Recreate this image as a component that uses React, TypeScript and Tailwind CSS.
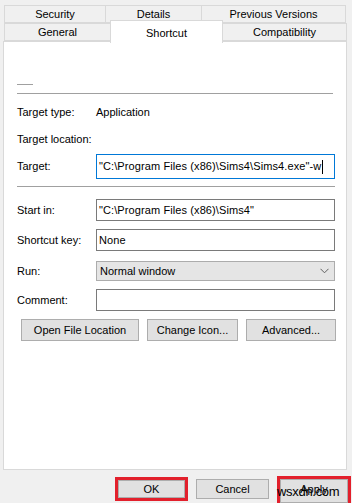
import React from 'react';

const font = { fontFamily: '"Liberation Sans", Arial, sans-serif' };

function Tab({ label, w }: { label: string; w: string }) {
  return (
    <div className={`${w} h-[18px] flex items-center justify-center border border-[#d9d9d9] -ml-px first:ml-0 bg-[#f0f0f0] text-[11px] text-black`}>
      {label}
    </div>
  );
}

function Field({ label, value, tall, caret }: { label: string; value?: string; tall?: boolean; caret?: boolean }) {
  return (
    <div className="flex items-center">
      <div className="w-[79px] text-[11px] text-black">{label}</div>
      <div
        className={`w-[239px] ${tall ? 'h-[25px] border-[#0078d7]' : 'h-[22px] border-[#7a7a7a]'} border bg-white flex items-center px-[2px] text-[11px] text-black`}
      >
        <span className="tracking-[0.1px]">{value}</span>
        {caret && <span className="ml-px w-px h-[14px] bg-black" />}
      </div>
    </div>
  );
}

function Btn({ label, w }: { label: string; w: string }) {
  return (
    <div className={`${w} h-[22px] border border-[#adadad] bg-[#e1e1e1] flex items-center justify-center text-[11px] text-black`}>
      {label}
    </div>
  );
}

export default function App() {
  return (
    <div className="relative w-[352px] h-[503px] bg-[#f0f0f0] overflow-hidden" style={font}>
      {/* Tab strip */}
      <div className="pt-[5px] pl-[4px]">
        <div className="flex">
          <Tab label="Security" w="w-[102px]" />
          <Tab label="Details" w="w-[97px]" />
          <Tab label="Previous Versions" w="w-[145px]" />
        </div>
        <div className="flex">
          <Tab label="General" w="w-[107px]" />
          <div className="relative z-10 w-[113px] h-[23px] -mt-[3px] -ml-px -mb-[2px] bg-white border border-[#d9d9d9] border-b-0 flex items-start justify-center pt-[4px] text-[11px] text-black">
            Shortcut
          </div>
          <Tab label="Compatibility" w="w-[125px]" />
        </div>
      </div>

      {/* Panel */}
      <div className="ml-[3px] w-[344px] h-[429px] bg-white border border-[#d9d9d9]">
        <div className="pl-[13px]">
          <div className="mt-[42px] w-[16px] h-px bg-[#a0a0a0]" />
          <div className="mt-[8px] w-[316px] h-px bg-[#a0a0a0]" />

          <div className="mt-[11px] flex items-center h-[14px] text-[11px] text-black">
            <div className="w-[79px]">Target type:</div>
            <div>Application</div>
          </div>
          <div className="mt-[13px] h-[14px] flex items-center text-[11px] text-black">Target location:</div>

          <div className="mt-[8px]">
            <Field label="Target:" value={'"C:\\Program Files (x86)\\Sims4\\Sims4.exe"-w'} tall caret />
          </div>
          <div className="mt-[7px] w-[318px] h-px bg-[#a0a0a0]" />

          <div className="mt-[12px]">
            <Field label="Start in:" value={'"C:\\Program Files (x86)\\Sims4"'} />
          </div>
          <div className="mt-[8px]">
            <Field label="Shortcut key:" value="None" />
          </div>
          <div className="mt-[10px] flex items-center">
            <div className="w-[79px] text-[11px] text-black">Run:</div>
            <div className="w-[239px] h-[20px] border border-[#acacac] bg-[#e5e5e5] flex items-center justify-between pl-[3px] pr-[5px] text-[11px] text-black">
              <span>Normal window</span>
              <svg width="9" height="6" viewBox="0 0 9 6" fill="none">
                <path d="M0.5 0.8 L4.5 4.8 L8.5 0.8" stroke="#606060" strokeWidth="1" />
              </svg>
            </div>
          </div>
          <div className="mt-[8px]">
            <Field label="Comment:" />
          </div>

          <div className="mt-[8px] pl-[4px] flex gap-[8px]">
            <Btn label="Open File Location" w="w-[118px]" />
            <Btn label="Change Icon..." w="w-[91px]" />
            <Btn label="Advanced..." w="w-[90px]" />
          </div>
        </div>
      </div>

      {/* Bottom buttons */}
      <div className="mt-[6px] pl-[115px] flex items-start">
        <div className="border-[3px] border-[#e2202c] w-[73px] h-[24px] mt-[1px]">
          <div className="w-full h-full border border-[#adadad] bg-[#e1e1e1] flex items-center justify-center text-[11px] text-black">OK</div>
        </div>
        <div className="ml-[8px] mt-[3px] w-[73px] h-[20px] border border-[#adadad] bg-[#e1e1e1] flex items-center justify-center text-[11px] text-black">
          Cancel
        </div>
        <div className="ml-[8px] border-[3px] border-[#e2202c] w-[74px] h-[30px]">
          <div className="w-full h-full border border-[#adadad] bg-[#e1e1e1] flex items-center justify-center text-[11px] text-black pb-[4px]">Apply</div>
        </div>
      </div>

      {/* Watermark */}
      <div className="absolute left-[277px] top-[485px] text-[13px] leading-none text-black tracking-[-0.3px]" style={font}>
        wsxdn.com
      </div>
    </div>
  );
}
